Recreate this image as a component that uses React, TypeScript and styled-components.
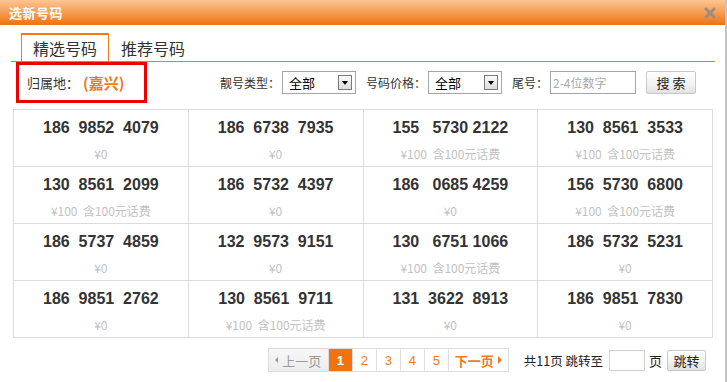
import styled, { createGlobalStyle } from 'styled-components';

const GlobalStyle = createGlobalStyle`
  html, body {
    margin: 0;
    padding: 0;
    background: #fff;
  }
  body {
    font-family: 'Noto Sans CJK SC', 'Liberation Sans', sans-serif;
    font-size: 12px;
    color: #333;
  }
`;

interface NumberItem {
  number: string;
  price: number;
}

const numbers: NumberItem[] = [
  { number: '186  9852  4079', price: 0 },
  { number: '186  6738  7935', price: 0 },
  { number: '155   5730 2122', price: 100 },
  { number: '130  8561  3533', price: 100 },
  { number: '130  8561  2099', price: 100 },
  { number: '186  5732  4397', price: 0 },
  { number: '186   0685 4259', price: 0 },
  { number: '156  5730  6800', price: 100 },
  { number: '186  5737  4859', price: 0 },
  { number: '132  9573  9151', price: 0 },
  { number: '130   6751 1066', price: 100 },
  { number: '186  5732  5231', price: 0 },
  { number: '186  9851  2762', price: 0 },
  { number: '130  8561  9711', price: 100 },
  { number: '131  3622  8913', price: 0 },
  { number: '186  9851  7830', price: 0 },
];

const Dialog = styled.div`
  width: 725px;
  height: 382px;
  border-right: 2px solid #c2c2c2;
  background: #fff;
  overflow: hidden;
`;

const TitleBar = styled.div`
  height: 25px;
  display: flex;
  align-items: center;
  justify-content: space-between;
  padding: 0 9px;
  background: linear-gradient(to bottom, #fdc592 0%, #f6a15a 45%, #ee7212 100%);
`;

const Title = styled.span`
  color: #fff;
  font-size: 13px;
  font-weight: bold;
  letter-spacing: 0.5px;
`;

const CloseIcon = styled.svg`
  width: 12px;
  height: 12px;
  display: block;
`;

const Body = styled.div`
  padding: 0 10px 0 11px;
`;

const TabBar = styled.div`
  margin-top: 8px;
  height: 28px;
  display: flex;
  align-items: stretch;
  padding-left: 10px;
  border-bottom: 1px solid #f07a1e;
`;

const Tab = styled.div<{ $active?: boolean }>`
  display: flex;
  align-items: center;
  padding: 0 11px;
  font-size: 16px;
  color: #333;
  border: 1px solid ${({ $active }) => ($active ? '#f07a1e' : 'transparent')};
  border-top: 2px solid ${({ $active }) => ($active ? '#f07a1e' : 'transparent')};
  border-bottom: none;
`;

const FilterRow = styled.div`
  display: flex;
  align-items: center;
  height: 41px;
`;

const Location = styled.div`
  margin-left: 5px;
  width: 117px;
  height: 35px;
  border: 3px solid #ee0000;
  display: flex;
  align-items: center;
  padding-left: 8px;
  font-size: 13px;
`;

const City = styled.span`
  margin-left: 4px;
  color: #f07a1e;
  font-weight: bold;
  font-size: 15px;
`;

const Filters = styled.div`
  display: flex;
  align-items: center;
  margin-left: 73px;
`;

const FieldLabel = styled.span`
  font-size: 12px;
  color: #333;
  margin-right: 2px;
`;

const Select = styled.div`
  width: 74px;
  height: 23px;
  box-sizing: border-box;
  border: 1px solid #a5a5a5;
  margin-right: 10px;
  display: flex;
  align-items: center;
  justify-content: space-between;
  padding: 0 3px 0 6px;
  font-size: 13px;
  color: #000;
`;

const SelectArrow = styled.span`
  width: 14px;
  height: 15px;
  box-sizing: border-box;
  border: 1px solid #7a7a7a;
  background: linear-gradient(to bottom, #fafafa, #dcdcdc);
  display: grid;
  place-items: center;

  &::after {
    content: '';
    border-left: 3.5px solid transparent;
    border-right: 3.5px solid transparent;
    border-top: 4px solid #000;
  }
`;

const TailInput = styled.div`
  width: 86px;
  height: 23px;
  box-sizing: border-box;
  border: 1px solid #a5a5a5;
  display: flex;
  align-items: center;
  padding-left: 2px;
  font-size: 12px;
  color: #aaa;
  margin-right: 10px;
`;

const Button = styled.button<{ $w: number; $h: number }>`
  width: ${({ $w }) => $w}px;
  height: ${({ $h }) => $h}px;
  border: 1px solid #c8c8c8;
  border-radius: 2px;
  background: linear-gradient(to bottom, #ffffff 0%, #f3f3f3 55%, #e2e2e2 100%);
  font-family: 'Noto Sans CJK SC', sans-serif;
  font-size: 13px;
  color: #222;
  padding: 0;
  display: flex;
  align-items: center;
  justify-content: center;
`;

const Grid = styled.div`
  margin: 6px 2px 0;
  display: grid;
  grid-template-columns: repeat(4, 1fr);
  border-top: 1px solid #dcdcdc;
  border-left: 1px solid #dcdcdc;
`;

const Cell = styled.div`
  height: 48px;
  padding-top: 8px;
  border-right: 1px solid #dcdcdc;
  border-bottom: 1px solid #dcdcdc;
  display: flex;
  flex-direction: column;
  align-items: center;
`;

const Phone = styled.div`
  font-family: 'Liberation Sans', Arial, sans-serif;
  font-weight: bold;
  font-size: 16px;
  line-height: 20px;
  color: #333;
  white-space: pre;
`;

const Price = styled.div`
  margin-top: 8px;
  font-size: 12px;
  line-height: 16px;
  color: #c2c2c2;
  white-space: pre;
`;

const PagerRow = styled.div`
  display: flex;
  align-items: center;
  justify-content: flex-end;
  margin-top: 10px;
  margin-right: 9px;
`;

const PageList = styled.div`
  display: flex;
  border: 1px solid #dcdcdc;
  height: 22px;
`;

const PageItem = styled.span<{ $active?: boolean; $wide?: boolean; $dim?: boolean }>`
  display: flex;
  align-items: center;
  justify-content: center;
  gap: 4px;
  width: ${({ $wide }) => ($wide ? '59px' : '23px')};
  border-left: 1px solid #dcdcdc;
  font-family: ${({ $wide }) =>
    $wide ? "'Noto Sans CJK SC', sans-serif" : "'Liberation Sans', Arial, sans-serif"};
  font-size: 13px;
  font-weight: ${({ $active, $wide, $dim }) => ($active || ($wide && !$dim) ? 'bold' : 'normal')};
  color: ${({ $active, $dim }) => ($active ? '#fff' : $dim ? '#999' : '#f07a1e')};
  background: ${({ $active, $dim }) =>
    $active ? '#ef7410' : $dim ? 'linear-gradient(to bottom, #f7f7f7, #ececec)' : '#fff'};

  &:first-child {
    border-left: none;
  }
`;

const Triangle = styled.span<{ $dir: 'left' | 'right'; $color: string }>`
  width: 0;
  height: 0;
  border-top: ${({ $dir }) => ($dir === 'left' ? '3px' : '4px')} solid transparent;
  border-bottom: ${({ $dir }) => ($dir === 'left' ? '3px' : '4px')} solid transparent;
  ${({ $dir, $color }) =>
    $dir === 'left'
      ? `border-right: 3px solid ${$color};`
      : `border-left: 4px solid ${$color};`}
`;

const PageInfo = styled.span`
  margin-left: 15px;
  font-size: 12.5px;
  color: #222;
`;

const JumpInput = styled.div`
  margin-left: 6px;
  width: 36px;
  height: 21px;
  box-sizing: border-box;
  border: 1px solid #d0d0d0;
`;

const PageUnit = styled.span`
  margin: 0 5px 0 4px;
  font-size: 13px;
  color: #222;
`;

export default function App() {
  return (
    <>
      <GlobalStyle />
      <Dialog>
        <TitleBar>
          <Title>选新号码</Title>
          <CloseIcon viewBox="0 0 12 12" aria-hidden="true">
            <path
              d="M2 2l8 8M10 2l-8 8"
              stroke="#9c8c84"
              strokeWidth="3"
              strokeLinecap="round"
            />
          </CloseIcon>
        </TitleBar>
        <Body>
          <TabBar>
            <Tab $active>精选号码</Tab>
            <Tab>推荐号码</Tab>
          </TabBar>
          <FilterRow>
            <Location>
              归属地：<City>(嘉兴)</City>
            </Location>
            <Filters>
              <FieldLabel>靓号类型：</FieldLabel>
              <Select>
                全部
                <SelectArrow />
              </Select>
              <FieldLabel>号码价格：</FieldLabel>
              <Select>
                全部
                <SelectArrow />
              </Select>
              <FieldLabel>尾号：</FieldLabel>
              <TailInput>2-4位数字</TailInput>
              <Button $w={50} $h={23}>搜 索</Button>
            </Filters>
          </FilterRow>
          <Grid>
            {numbers.map((n) => (
              <Cell key={n.number}>
                <Phone>{n.number}</Phone>
                <Price>{n.price > 0 ? `¥${n.price}  含${n.price}元话费` : '¥0'}</Price>
              </Cell>
            ))}
          </Grid>
          <PagerRow>
            <PageList>
              <PageItem $wide $dim>
                <Triangle $dir="left" $color="#999" />
                上一页
              </PageItem>
              <PageItem $active>1</PageItem>
              <PageItem>2</PageItem>
              <PageItem>3</PageItem>
              <PageItem>4</PageItem>
              <PageItem>5</PageItem>
              <PageItem $wide>
                下一页
                <Triangle $dir="right" $color="#f07a1e" />
              </PageItem>
            </PageList>
            <PageInfo>共11页 跳转至</PageInfo>
            <JumpInput />
            <PageUnit>页</PageUnit>
            <Button $w={39} $h={21}>跳转</Button>
          </PagerRow>
        </Body>
      </Dialog>
    </>
  );
}
